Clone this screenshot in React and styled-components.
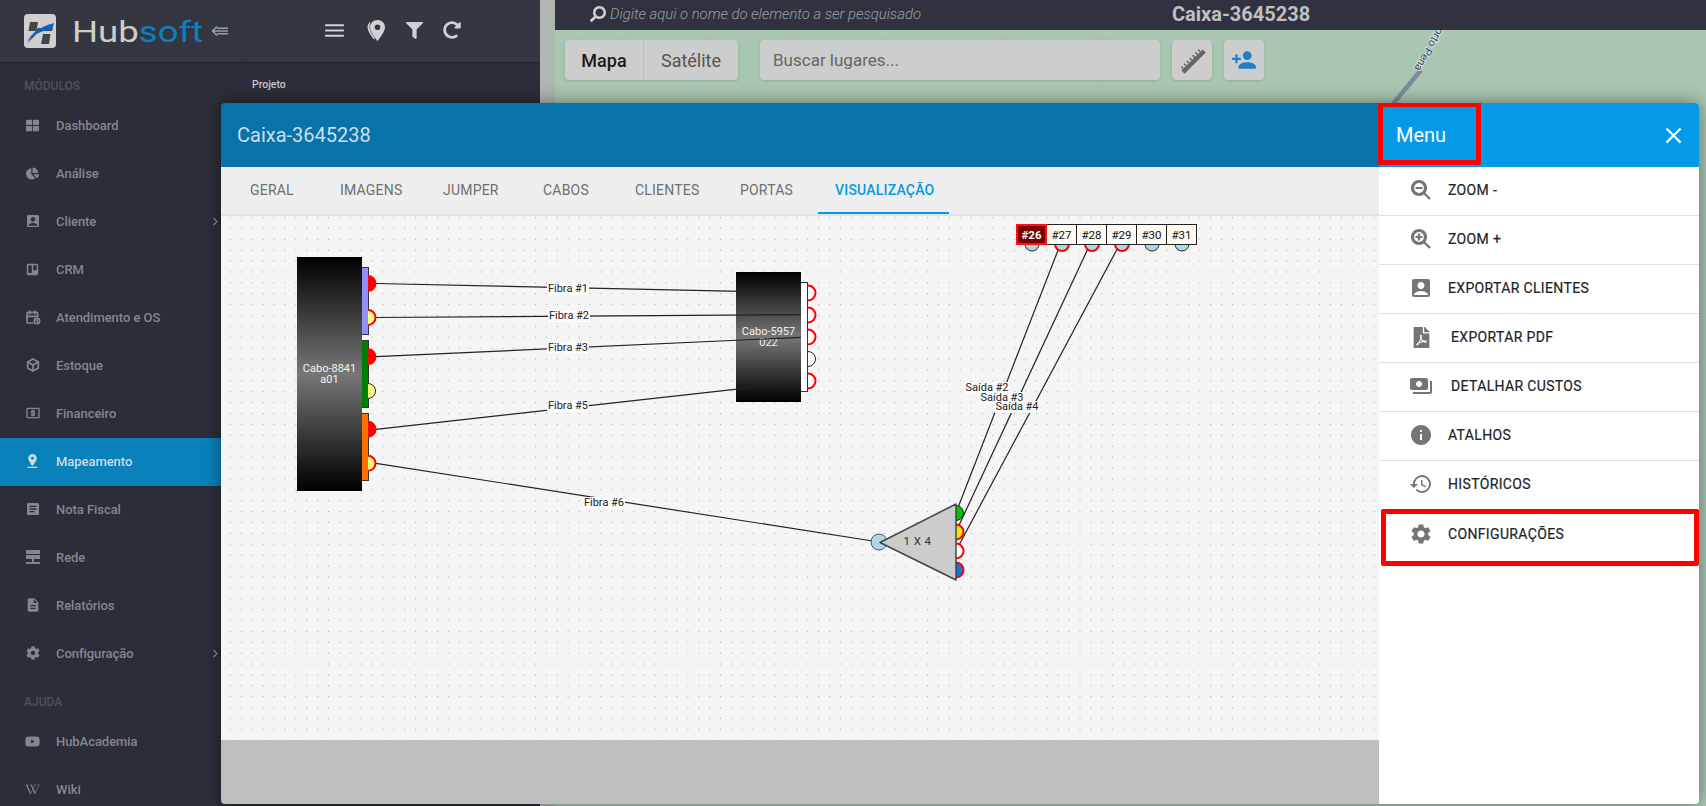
import React from "react";
import styled, { createGlobalStyle } from "styled-components";
import {
  FaThLarge, FaChartPie, FaTrello, FaFilter, FaRedoAlt, FaCog, FaYoutube,
  FaWikipediaW, FaFilePdf, FaChevronRight, FaSearch,
} from "react-icons/fa";
import {
  MdAccountBox, MdLocalAtm, MdPinDrop, MdArticle, MdDescription, MdMenu,
  MdInfo, MdHistory, MdSettings, MdClose, MdPayments, MdPersonAdd,
} from "react-icons/md";
import { TbCalendarTime, TbBox } from "react-icons/tb";

const GlobalStyle = createGlobalStyle`
  html, body { margin: 0; padding: 0; height: 100%; overflow: hidden; }
  body { font-family: Roboto, "Liberation Sans", sans-serif; background: #2b2d38; }
  * { box-sizing: border-box; }
`;

// canvas origin on the page, diagram data below is in page coordinates
const OX = 221;
const OY = 216;

function RedeIcon() {
  return (
    <svg width="16" height="16" viewBox="0 0 16 16" fill="currentColor">
      <rect x="1" y="1" width="14" height="4" />
      <rect x="1" y="6" width="14" height="4" />
      <rect x="7" y="10" width="2" height="3" />
      <rect x="1" y="13" width="14" height="2" />
    </svg>
  );
}

function CollapseIcon() {
  return (
    <svg width="17" height="12" viewBox="0 0 17 12" fill="none" stroke="#9c9da3" strokeWidth="1.5">
      <path d="M6 1.5 1.5 6 6 10.5M2 6h15M6 3.2h11M6 8.8h11" />
    </svg>
  );
}

function PinIcon() {
  return (
    <svg width="19" height="21" viewBox="0 0 19 21">
      <path d="M10.5 0C6 0 3 3.300 3 7.200c0 4.800 7.500 13.800 7.500 13.800S18 12 18 7.200C18 3.300 15 0 10.500 0zm0 10a2.800 2.800 0 1 1 0-5.600 2.800 2.800 0 0 1 0 5.600z" fill="#d0d0d3" />
      <path d="M3.500 1.500C1.500 3 .5 5 .5 7.200c0 3.500 4 9 6.500 12.300l1-1.300C5.500 14.800 2.500 10 2.500 7.200c0-2.200.4-4 1-5.700z" fill="#d0d0d3" />
    </svg>
  );
}

function LogoMark() {
  return (
    <svg width="32" height="34" viewBox="0 0 32 34">
      <rect width="32" height="34" rx="4" fill="#cfcfcf" />
      <path d="M6 8h8l-1.500 9H4.500zM19 20h7.500L25 30h-8zM3 30 14 14h15l-1 3H15z" fill="#43454d" />
      <path d="M3 28C8 18 16 13 30 9l-2 7c-9 0-17 3-25 12z" fill="#0b63c4" />
    </svg>
  );
}

function RulerIcon() {
  return (
    <svg width="28" height="28" viewBox="0 0 28 28" fill="#666">
      <g transform="rotate(-45 14 14)">
        <rect x="-1" y="14" width="30" height="4.500" />
        <path d="M1 11h1.500v3H1zM5 11h1.500v3H5zM9 11h1.500v3H9zM13 11h1.500v3H13zM17 11h1.500v3H17zM21 11h1.500v3H21zM25 11h1.500v3H25z" />
      </g>
    </svg>
  );
}

function ZoomIcon({ plus }) {
  return (
    <svg width="22" height="22" viewBox="0 0 22 22" fill="none" stroke="#757575">
      <circle cx="9" cy="9" r="6.500" strokeWidth="3.200" />
      <path d="M13.500 13.500 20 20" strokeWidth="2.400" />
      <path d={plus ? "M5.500 9h7M9 5.500v7" : "M5.500 9h7"} strokeWidth="2.200" />
    </svg>
  );
}

const NAV_ITEMS = [
  { label: "Dashboard", icon: <FaThLarge size={13} /> },
  { label: "Análise", icon: <FaChartPie size={13} /> },
  { label: "Cliente", icon: <MdAccountBox size={16} />, more: true },
  { label: "CRM", icon: <FaTrello size={13} /> },
  { label: "Atendimento e OS", icon: <TbCalendarTime size={16} strokeWidth={2.6} /> },
  { label: "Estoque", icon: <TbBox size={16} strokeWidth={2.6} /> },
  { label: "Financeiro", icon: <MdLocalAtm size={16} /> },
  { label: "Mapeamento", icon: <MdPinDrop size={18} />, active: true },
  { label: "Nota Fiscal", icon: <MdArticle size={16} /> },
  { label: "Rede", icon: <RedeIcon /> },
  { label: "Relatórios", icon: <MdDescription size={16} /> },
  { label: "Configuração", icon: <FaCog size={14} />, more: true },
];

const HELP_ITEMS = [
  { label: "HubAcademia", icon: <FaYoutube size={15} /> },
  { label: "Wiki", icon: <FaWikipediaW size={15} /> },
];

// width and text inset of each tab
const TABS = [
  { label: "GERAL", width: 97, inset: 27 },
  { label: "IMAGENS", width: 100, inset: 20 },
  { label: "JUMPER", width: 100, inset: 23 },
  { label: "CABOS", width: 97, inset: 23 },
  { label: "CLIENTES", width: 101, inset: 18 },
  { label: "PORTAS", width: 100, inset: 22 },
  { label: "VISUALIZAÇÃO", width: 131, inset: 17, active: true },
];

const MENU_ITEMS = [
  { label: "ZOOM -", icon: <ZoomIcon /> },
  { label: "ZOOM +", icon: <ZoomIcon plus /> },
  { label: "EXPORTAR CLIENTES", icon: <MdAccountBox size={24} /> },
  { label: "EXPORTAR PDF", icon: <FaFilePdf size={21} />, wide: true },
  { label: "DETALHAR CUSTOS", icon: <MdPayments size={24} />, wide: true },
  { label: "ATALHOS", icon: <MdInfo size={24} /> },
  { label: "HISTÓRICOS", icon: <MdHistory size={24} /> },
  { label: "CONFIGURAÇÕES", icon: <MdSettings size={24} /> },
];

const FIBERS = [
  { label: "Fibra #1", x: 568, y: 289, from: [376, 283.5], to: [801, 292.7] },
  { label: "Fibra #2", x: 569, y: 316, from: [376, 317.5], to: [801, 314.7] },
  { label: "Fibra #3", x: 568, y: 348, from: [376, 356.7], to: [801, 337.3] },
  { label: "Fibra #5", x: 568, y: 406, from: [376, 429.3], to: [801, 382] },
  { label: "Fibra #6", x: 604, y: 503, from: [376, 463.3], to: [879, 542] },
];

const OUTPUTS = [
  { label: "Saída #2", x: 987, y: 388, from: [956, 512.7], to: [1062, 240] },
  { label: "Saída #3", x: 1002, y: 398, from: [956, 531.7], to: [1092, 240] },
  { label: "Saída #4", x: 1017, y: 407, from: [956, 550.7], to: [1122, 240] },
];

const TUBES = [
  { color: "#8f8fff", top: 267, height: 68 },
  { color: "#008000", top: 340, height: 68 },
  { color: "#ff7000", top: 413, height: 68 },
];

const HALF_PORTS = [
  { x: 368, y: 283.5, fill: "#ff0000", stroke: "#ff0000" },
  { x: 368, y: 317.5, fill: "#ffff80", stroke: "#ff0000" },
  { x: 368, y: 356.7, fill: "#ff0000", stroke: "#ff0000" },
  { x: 368, y: 391, fill: "#ffff80", stroke: "#222" },
  { x: 368, y: 429.3, fill: "#ff0000", stroke: "#ff0000" },
  { x: 368, y: 463.3, fill: "#ffff80", stroke: "#ff0000" },
  { x: 808, y: 293, fill: "#fff", stroke: "#ff0000" },
  { x: 808, y: 315, fill: "#fff", stroke: "#ff0000" },
  { x: 808, y: 337, fill: "#fff", stroke: "#ff0000" },
  { x: 808, y: 359, fill: "#fff", stroke: "#222" },
  { x: 808, y: 381, fill: "#fff", stroke: "#ff0000" },
  { x: 956, y: 513, fill: "#00c800", stroke: "#222" },
  { x: 956, y: 532, fill: "#e8e800", stroke: "#ff0000" },
  { x: 956, y: 551, fill: "#fff", stroke: "#ff0000" },
  { x: 956, y: 570, fill: "#0a78dc", stroke: "#ff0000" },
];

const TOP_PORTS = [
  { label: "#26", stroke: "#222", active: true },
  { label: "#27", stroke: "#ff0000" },
  { label: "#28", stroke: "#ff0000" },
  { label: "#29", stroke: "#ff0000" },
  { label: "#30", stroke: "#222" },
  { label: "#31", stroke: "#222" },
];

const MAP_LINES = [
  "M585 30l-3 14M635 30c-12 6-20 10-25 22l-10 12M703 30c8 14 6 24 12 34M760 76c-6 10-9 30-10 27M782 30c-1 6 8 8 14 4h10M878 30c4 8 2 12 6 20",
  "M1000 30c2 10-2 16 4 22M1080 30c8 6 26 4 32 14 6 14-6 20-8 32-2 8 0 20 0 27",
  "M1340 30c20 8 44 14 54 20 4 6-6 14-6 24 0 10 4 18 2 29M1440 54h20c6 0 4 6 14 9",
  "M1534 30l1 47h10V30M1534 50l10 10-10 10",
  "M1590 80c8 8 10 14 12 20l-3 3M1602 98c20-10 40-26 50-30 6-4 10-14 20-8l6 8 14-4 6 8-2 14-12 2-6-8-6-8-10-4",
  "M1699 300c2 6 4 4 7 2M1699 420l7 10M1699 560l7-4",
];

function App() {
  return (
    <>
      <GlobalStyle />
      <Page>
        <Sidebar>
          <BrandBar>
            <LogoMark />
            <BrandName>Hub<BrandAccent>soft</BrandAccent></BrandName>
            <Collapse><CollapseIcon /></Collapse>
          </BrandBar>
          <SectionTitle>MÓDULOS</SectionTitle>
          {NAV_ITEMS.map((item) => (
            <NavRow key={item.label} $active={item.active}>
              <NavIcon>{item.icon}</NavIcon>
              {item.label}
              {item.more && <NavMore><FaChevronRight size={9} /></NavMore>}
            </NavRow>
          ))}
          <SectionTitle>AJUDA</SectionTitle>
          {HELP_ITEMS.map((item) => (
            <NavRow key={item.label}>
              <NavIcon>{item.icon}</NavIcon>
              {item.label}
            </NavRow>
          ))}
        </Sidebar>

        <SidePanel>
          <PanelTools>
            <MdMenu size={25} />
            <PinIcon />
            <FaFilter size={17} />
            <FaRedoAlt size={18} />
          </PanelTools>
          <ProjectLabel>Projeto</ProjectLabel>
        </SidePanel>

        <Gutter />

        <MapArea>
          <MapDrawing viewBox="555 30 1151 776" width="1151" height="776">
            <g fill="none" stroke="#b2bdb8" strokeWidth="1">
              {MAP_LINES.map((d) => <path key={d} d={d} />)}
            </g>
            <path d="M1393 104 1421 70" stroke="#7b8ea0" strokeWidth="4.500" />
            <RoadName x="1440.500" y="21" transform="rotate(119 1440.500 21)">Porto Pena</RoadName>
          </MapDrawing>
          <SearchBar>
            <SearchHint><FaSearch size={16} />Digite aqui o nome do elemento a ser pesquisado</SearchHint>
            <BoxTitle>Caixa-3645238</BoxTitle>
          </SearchBar>
          <MapControls>
            <MapToggle>
              <MapMode $on $width={79}>Mapa</MapMode>
              <MapMode $width={94}>Satélite</MapMode>
            </MapToggle>
            <PlaceSearch>Buscar lugares...</PlaceSearch>
            <MapButton $color="#666"><RulerIcon /></MapButton>
            <MapButton $color="#1f7dca"><MdPersonAdd size={26} /></MapButton>
          </MapControls>
        </MapArea>

        <Modal>
          <ModalMain>
            <ModalHeader>Caixa-3645238</ModalHeader>
            <TabBar>
              {TABS.map((tab) => (
                <Tab key={tab.label} $width={tab.width} $inset={tab.inset} $active={tab.active}>{tab.label}</Tab>
              ))}
            </TabBar>
            <Canvas>
              <CableBlock $x={297} $y={257} $w={65} $h={234}>Cabo-8841<br />a01</CableBlock>
              <CableBlock $x={736} $y={272} $w={65} $h={130}>Cabo-5957<br />022</CableBlock>
              {TUBES.map((tube) => (
                <Tube key={tube.top} $x={362} $y={tube.top} $h={tube.height} $color={tube.color} />
              ))}
              <Tube $x={801} $y={282} $h={110} $color="#fff" />
              <Wires viewBox={`${OX} ${OY} 1158 524`} width="1158" height="524">
                {[...FIBERS, ...OUTPUTS].map((w) => (
                  <line key={w.label} x1={w.from[0]} y1={w.from[1]} x2={w.to[0]} y2={w.to[1]} stroke="#222" strokeWidth="1.200" />
                ))}
                {HALF_PORTS.map((p) => (
                  <path
                    key={`${p.x}-${p.y}`}
                    d={`M${p.x} ${p.y - 7.5}A7.500 7.500 0 0 1 ${p.x} ${p.y + 7.5}`}
                    fill={p.fill}
                    stroke={p.stroke}
                    strokeWidth={p.stroke === "#222" ? 1 : 2}
                  />
                ))}
                {TOP_PORTS.map((p, i) => (
                  <path
                    key={p.label}
                    d={`M${1025 + i * 30} 244A7 7 0 0 0 ${1039 + i * 30} 244`}
                    fill="#add8e6"
                    stroke={p.stroke}
                    strokeWidth={p.stroke === "#222" ? 1 : 2}
                  />
                ))}
                <circle cx="879" cy="542" r="8" fill="#add8e6" stroke="#555" strokeWidth="1" />
                <path d="M880 542.500 956 504V580Z" fill="#cccccc" stroke="#444" strokeWidth="1.500" strokeLinejoin="round" />
                <text x="917.500" y="545" fontSize="11.500" textAnchor="middle" fill="#333" fontFamily="Roboto, sans-serif" letterSpacing=".4">1 X 4</text>
              </Wires>
              {[...FIBERS, ...OUTPUTS].map((w) => (
                <WireLabel key={w.label} $x={w.x} $y={w.y}>{w.label}</WireLabel>
              ))}
              <PortTable>
                {TOP_PORTS.map((p) => (
                  <PortCell key={p.label} $active={p.active}>{p.label}</PortCell>
                ))}
              </PortTable>
            </Canvas>
            <ModalFooter />
          </ModalMain>

          <MenuPanel>
            <MenuHeader>
              Menu
              <CloseButton><MdClose size={27} /></CloseButton>
            </MenuHeader>
            <MenuList>
              {MENU_ITEMS.map((item) => (
                <MenuRow key={item.label}>
                  <MenuIcon>{item.icon}</MenuIcon>
                  <MenuText $wide={item.wide}>{item.label}</MenuText>
                </MenuRow>
              ))}
            </MenuList>
            <MenuMark />
            <ConfigMark />
          </MenuPanel>
        </Modal>
      </Page>
    </>
  );
}

const Page = styled.div`
  position: relative;
  display: flex;
  width: 1706px;
  height: 806px;
  overflow: hidden;
  font-family: Roboto, "Liberation Sans", sans-serif;
`;

const Sidebar = styled.aside`
  flex: 0 0 241px;
  background: #2b2d38;
  color: #85868c;
`;

const BrandBar = styled.div`
  display: flex;
  align-items: center;
  height: 62px;
  padding-left: 24px;
  background: #343640;
  box-shadow: 0 1px 1px rgba(0, 0, 0, 0.25);
`;

const BrandName = styled.div`
  width: 139px;
  margin-left: 16px;
  font-size: 30px;
  color: #cdcdcd;
  transform: scaleX(1.22);
  transform-origin: left center;
`;

const BrandAccent = styled.span`
  color: #0d7fc0;
`;

const Collapse = styled.div`
  display: flex;
`;

const SectionTitle = styled.div`
  display: flex;
  align-items: flex-end;
  height: 40px;
  padding: 0 0 9px 24px;
  font-size: 12px;
  font-weight: 500;
  color: #50525b;
`;

const NavRow = styled.div`
  display: flex;
  align-items: center;
  height: 48px;
  padding: 0 0 2px 24px;
  font-size: 13px;
  font-weight: 500;
  letter-spacing: -0.05px;
  background: ${(p) => (p.$active ? "#0a80bb" : "transparent")};
  color: ${(p) => (p.$active ? "#c6dbe7" : "#85868c")};
`;

const NavIcon = styled.span`
  display: flex;
  justify-content: center;
  width: 17px;
  margin-right: 15px;
`;

const NavMore = styled.span`
  display: flex;
  margin-left: auto;
  padding-right: 21px;
`;

const SidePanel = styled.section`
  flex: 0 0 299px;
  background: #2b2d38;
`;

const PanelTools = styled.div`
  display: flex;
  align-items: center;
  gap: 20px;
  height: 62px;
  padding: 0 0 2px 81px;
  background: #343640;
  color: #d0d0d3;
  box-shadow: 0 1px 1px rgba(0, 0, 0, 0.25);
`;

const ProjectLabel = styled.div`
  padding: 16px 0 0 11px;
  font-size: 10.5px;
  font-weight: 500;
  color: #c8c8cc;
`;

const Gutter = styled.div`
  flex: 0 0 15px;
  background: linear-gradient(90deg, #b4b4b4, #a9b8ae);
`;

const MapArea = styled.main`
  position: relative;
  flex: 1;
  background: #a9c6b2;
`;

const MapDrawing = styled.svg`
  position: absolute;
  left: 0;
  top: 30px;
`;

const RoadName = styled.text`
  font-family: Roboto, sans-serif;
  font-size: 11px;
  fill: #3c4654;
  stroke: #d6dfe0;
  stroke-width: 2px;
  paint-order: stroke;
`;

const SearchBar = styled.div`
  position: relative;
  display: flex;
  align-items: center;
  height: 30px;
  padding: 0 0 2px 35px;
  background: #30333f;
`;

const SearchHint = styled.div`
  display: flex;
  align-items: center;
  gap: 4px;
  width: 582px;
  font-size: 14.85px;
  font-style: italic;
  font-weight: 300;
  color: #9c9da2;

  svg {
    color: #d0d0d3;
    transform: scaleX(-1);
  }
`;

const BoxTitle = styled.div`
  font-size: 20px;
  font-weight: 700;
  color: #bfc0c3;
`;

const MapControls = styled.div`
  position: relative;
  display: flex;
  gap: 12px;
  padding: 10px;
`;

const MapToggle = styled.div`
  display: flex;
  margin-right: 10px;
  height: 40px;
  border-radius: 4px;
  background: #cdcdcd;
  box-shadow: 0 1px 3px rgba(0, 0, 0, 0.15);
  overflow: hidden;
`;

const MapMode = styled.div`
  display: flex;
  align-items: center;
  justify-content: center;
  width: ${(p) => p.$width}px;
  font-size: 18px;
  color: ${(p) => (p.$on ? "#1a1a1a" : "#555")};
  font-weight: ${(p) => (p.$on ? 500 : 400)};
  border-right: ${(p) => (p.$on ? "1px solid #bdbdbd" : "none")};
`;

const PlaceSearch = styled.div`
  display: flex;
  align-items: center;
  width: 400px;
  height: 40px;
  padding-left: 13px;
  font-size: 17px;
  color: #666;
  background: #cdcdcd;
  border-radius: 4px;
  box-shadow: 0 1px 3px rgba(0, 0, 0, 0.15);
`;

const MapButton = styled.div`
  display: flex;
  align-items: center;
  justify-content: center;
  width: 40px;
  height: 40px;
  color: ${(p) => p.$color};
  background: #cdcdcd;
  border-radius: 4px;
  box-shadow: 0 1px 3px rgba(0, 0, 0, 0.15);
`;

const Modal = styled.div`
  position: absolute;
  left: 221px;
  top: 103px;
  width: 1478px;
  height: 701px;
  display: flex;
  border-radius: 4px;
  overflow: hidden;
  box-shadow: 0 0 18px rgba(0, 0, 0, 0.45);
`;

const ModalMain = styled.div`
  flex: 0 0 1158px;
  display: flex;
  flex-direction: column;
`;

const ModalHeader = styled.header`
  display: flex;
  align-items: center;
  height: 64px;
  padding-left: 16px;
  font-size: 20px;
  color: #c9dfeb;
  background: #0a72aa;
`;

const TabBar = styled.nav`
  display: flex;
  align-items: flex-start;
  height: 49px;
  padding-left: 2px;
  background: #eeeeee;
  border-bottom: 2px solid #e2e2e2;
`;

const Tab = styled.div`
  display: flex;
  align-items: center;
  width: ${(p) => p.$width}px;
  height: 47px;
  padding-left: ${(p) => p.$inset}px;
  font-size: 14px;
  font-weight: ${(p) => (p.$active ? 500 : 400)};
  letter-spacing: 0.2px;
  color: ${(p) => (p.$active ? "#049ae5" : "#6f6f6f")};
  border-bottom: 2px solid ${(p) => (p.$active ? "#049ae5" : "transparent")};
`;

const Canvas = styled.div`
  position: relative;
  flex: 1;
  background-color: #f5f5f5;
  background-image: radial-gradient(circle at 0.5px 0.5px, #a8a8a8 0.5px, transparent 1px);
  background-size: 10.9px 10.9px;
  background-position: 9px 1px;
`;

const CableBlock = styled.div`
  position: absolute;
  left: ${(p) => p.$x - OX}px;
  top: ${(p) => p.$y - OY}px;
  width: ${(p) => p.$w}px;
  height: ${(p) => p.$h}px;
  display: flex;
  align-items: center;
  justify-content: center;
  text-align: center;
  font-size: 11px;
  line-height: 11px;
  color: #f2f2f2;
  background: linear-gradient(180deg, #000 0%, #777 50%, #000 100%);
`;

const Tube = styled.div`
  position: absolute;
  left: ${(p) => p.$x - OX}px;
  top: ${(p) => p.$y - OY}px;
  width: 7px;
  height: ${(p) => p.$h}px;
  background: ${(p) => p.$color};
  border: 1px solid #333;
  border-left: none;
`;

const Wires = styled.svg`
  position: absolute;
  left: 0;
  top: 0;
`;

const WireLabel = styled.span`
  position: absolute;
  left: ${(p) => p.$x - OX}px;
  top: ${(p) => p.$y - OY}px;
  transform: translate(-50%, -50%);
  padding: 0 1px;
  font-size: 11px;
  line-height: 12px;
  white-space: nowrap;
  color: #222;
  background: #fbfbfb;
`;

const PortTable = styled.div`
  position: absolute;
  left: ${1016 - OX}px;
  top: ${224 - OY}px;
  display: flex;
`;

const PortCell = styled.div`
  display: flex;
  align-items: center;
  justify-content: center;
  width: ${(p) => (p.$active ? 31 : 30)}px;
  height: 21px;
  font-size: 11.5px;
  font-weight: ${(p) => (p.$active ? 700 : 400)};
  color: ${(p) => (p.$active ? "#fff" : "#111")};
  background: ${(p) => (p.$active ? "#7a0000" : "#fffaf3")};
  border: ${(p) => (p.$active ? "2px solid #ff1010" : "1px solid #222")};
  border-left-width: ${(p) => (p.$active ? 2 : 0)}px;
`;

const ModalFooter = styled.footer`
  height: 64px;
  background: #bfbfbf;
`;

const MenuPanel = styled.div`
  position: relative;
  flex: 1;
  background: #fff;
`;

const MenuHeader = styled.header`
  display: flex;
  align-items: center;
  justify-content: space-between;
  height: 64px;
  padding: 0 12px 0 17px;
  font-size: 20px;
  color: #fff;
  background: #049ae5;
`;

const CloseButton = styled.span`
  display: flex;
`;

const MenuList = styled.div`
  display: flex;
  flex-direction: column;
`;

const MenuRow = styled.div`
  display: flex;
  align-items: center;
  height: 49px;
  padding: 0 0 2px 30px;
  border-bottom: 1px solid #e0e0e0;
  color: #212529;

  &:last-child {
    border-bottom: none;
  }
`;

const MenuIcon = styled.span`
  display: flex;
  justify-content: center;
  width: 24px;
  color: #757575;
`;

const MenuText = styled.span`
  margin-left: ${(p) => (p.$wide ? 18 : 15)}px;
  font-size: 14px;
  letter-spacing: 0.35px;
  -webkit-text-stroke: 0.2px #212529;
`;

const MenuMark = styled.div`
  position: absolute;
  left: -1px;
  top: -1px;
  width: 103px;
  height: 63px;
  border: 5px solid #ff0000;
  border-radius: 2px;
`;

const ConfigMark = styled.div`
  position: absolute;
  left: 2px;
  top: 406px;
  right: 0;
  height: 57px;
  border: 5px solid #ff0000;
  border-radius: 2px;
`;

export default App;
